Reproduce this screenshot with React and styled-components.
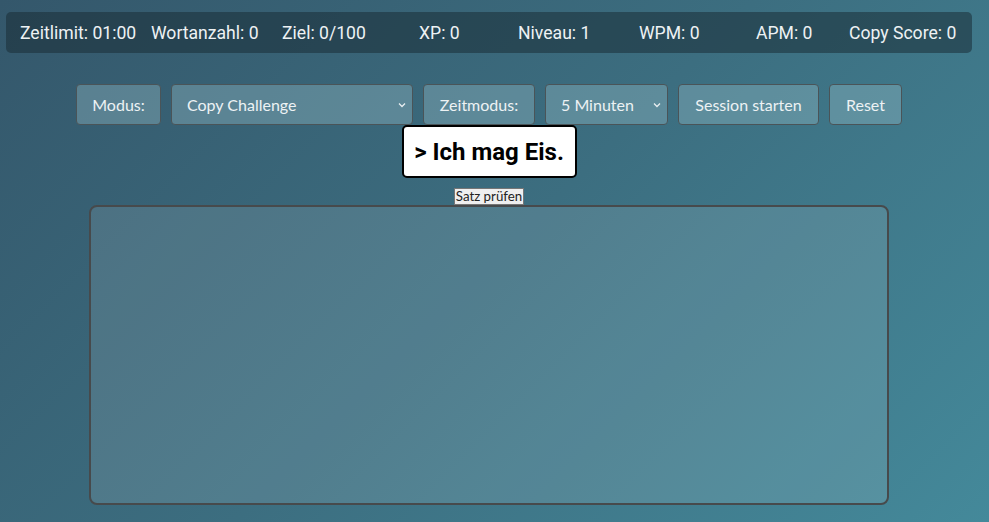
import styled, { createGlobalStyle } from "styled-components";

const GlobalStyle = createGlobalStyle`
	html, body {
		margin: 0;
		padding: 0;
		height: 100%;
		overflow: hidden;
	}
	body {
		background: linear-gradient(135deg, #34576b 0%, #3c6e80 50%, #44899a 100%);
		font-family: "Lato", "Liberation Sans", sans-serif;
		color: #f0f0f0;
	}
`;

const __stats__ = [
	{ label: "Zeitlimit", value: "01:00" },
	{ label: "Wortanzahl", value: "0" },
	{ label: "Ziel", value: "0/100" },
	{ label: "XP", value: "0" },
	{ label: "Niveau", value: "1" },
	{ label: "WPM", value: "0" },
	{ label: "APM", value: "0" },
	{ label: "Copy Score", value: "0" },
];

const Chevron = () => (
	<svg width="10" height="10" viewBox="0 0 10 10">
		<path d="M2 3.5 L5 6.5 L8 3.5" fill="none" stroke="#e8eef0" strokeWidth="1.3" />
	</svg>
);

export default function App() {
	return (
		<Page>
			<GlobalStyle />
			<StatsBar>
				{__stats__.map(({ label, value }) => (
					<Stat key={label}>
						{label}: {value}
					</Stat>
				))}
			</StatsBar>
			<Controls>
				<Control w={85}>Modus:</Control>
				<Select w={242}>
					<span>Copy Challenge</span>
					<Chevron />
				</Select>
				<Control w={112}>Zeitmodus:</Control>
				<Select w={123}>
					<span>5 Minuten</span>
					<Chevron />
				</Select>
				<Control w={141}>Session starten</Control>
				<Control w={73}>Reset</Control>
			</Controls>
			<WordBox>&gt; Ich mag Eis.</WordBox>
			<CheckButton>Satz prüfen</CheckButton>
			<TextArea />
		</Page>
	);
}

const Page = styled.main`
	width: 978px;
	display: flex;
	flex-direction: column;
	align-items: center;
`;

const StatsBar = styled.div`
	box-sizing: border-box;
	align-self: flex-start;
	margin: 12px 0 0 6px;
	width: 966px;
	height: 41px;
	padding: 1px 0 0 14px;
	display: grid;
	grid-template-columns: 131px 131px 137px 99px 121px 117px 93px auto;
	align-items: center;
	background: rgba(25, 45, 55, 0.55);
	border-radius: 5px;
	font-family: "Roboto", "Liberation Sans", sans-serif;
	font-size: 17.6px;
	color: #eef2f4;
`;

const Stat = styled.span`
	white-space: nowrap;
`;

const Controls = styled.div`
	margin-top: 31px;
	display: flex;
	gap: 10px;
`;

const Control = styled.div`
	box-sizing: border-box;
	width: ${p => p.w}px;
	height: 41px;
	display: flex;
	align-items: center;
	justify-content: center;
	background: rgba(150, 190, 200, 0.38);
	border: 1px solid #4a5458;
	border-radius: 4px;
	font-size: 16px;
	color: #edf2f4;
	white-space: nowrap;
`;

const Select = styled(Control)`
	justify-content: space-between;
	padding: 0 5px 0 15px;
`;

const WordBox = styled.div`
	box-sizing: border-box;
	width: 175px;
	height: 53px;
	display: flex;
	align-items: center;
	justify-content: center;
	background: #ffffff;
	border: 2px solid #000;
	border-radius: 5px;
	font-family: "Roboto", "Liberation Sans", sans-serif;
	font-weight: 700;
	font-size: 24px;
	color: #000;
`;

const CheckButton = styled.button`
	margin-top: 10px;
	height: 17px;
	padding: 0 1px;
	background: #efefef;
	border: 1px solid #767676;
	border-radius: 0;
	font-family: "Lato", "Liberation Sans", sans-serif;
	font-size: 13.3px;
	line-height: 13px;
	color: #222;
`;

const TextArea = styled.div`
	box-sizing: border-box;
	width: 800px;
	height: 300px;
	background: rgba(255, 255, 255, 0.11);
	border: 2px solid #474a4c;
	border-radius: 8px;
`;
